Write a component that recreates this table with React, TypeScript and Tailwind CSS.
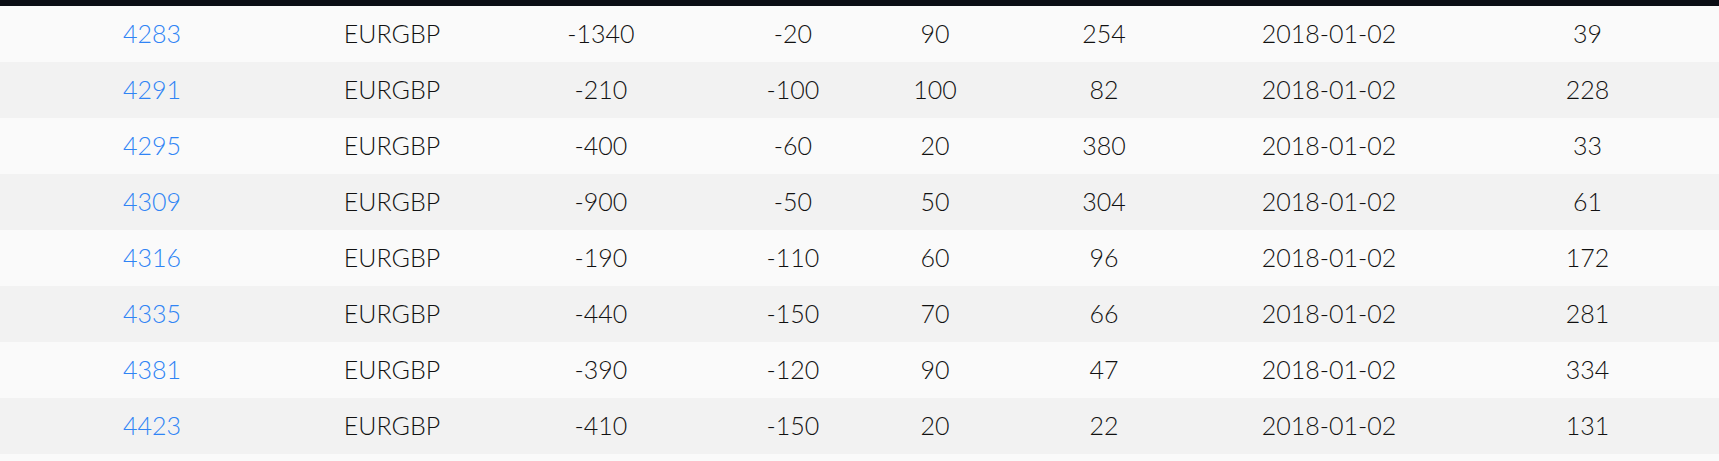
const ROWS = [
  ["4283", "EURGBP", "-1340", "-20", "90", "254", "2018-01-02", "39"],
  ["4291", "EURGBP", "-210", "-100", "100", "82", "2018-01-02", "228"],
  ["4295", "EURGBP", "-400", "-60", "20", "380", "2018-01-02", "33"],
  ["4309", "EURGBP", "-900", "-50", "50", "304", "2018-01-02", "61"],
  ["4316", "EURGBP", "-190", "-110", "60", "96", "2018-01-02", "172"],
  ["4335", "EURGBP", "-440", "-150", "70", "66", "2018-01-02", "281"],
  ["4381", "EURGBP", "-390", "-120", "90", "47", "2018-01-02", "334"],
  ["4423", "EURGBP", "-410", "-150", "20", "22", "2018-01-02", "131"],
];

export default function App() {
  return (
    <div className="min-h-screen bg-[#fafafa] font-['Lato',sans-serif] text-[25px] font-light text-[#111]">
      <div className="h-[6px] bg-[#0b0e15]" />
      {ROWS.map((row, i) => (
        <div
          key={row[0]}
          className={`grid h-[56px] grid-cols-[304px_176px_242px_142px_142px_196px_254px_263px] items-center text-center ${
            i % 2 === 0 ? "bg-[#fafafa]" : "bg-[#f2f2f2]"
          }`}
        >
          <a href="#" className="text-[#2f84f5]">
            {row[0]}
          </a>
          {row.slice(1).map((cell, j) => (
            <span key={j}>{cell}</span>
          ))}
        </div>
      ))}
    </div>
  );
}
